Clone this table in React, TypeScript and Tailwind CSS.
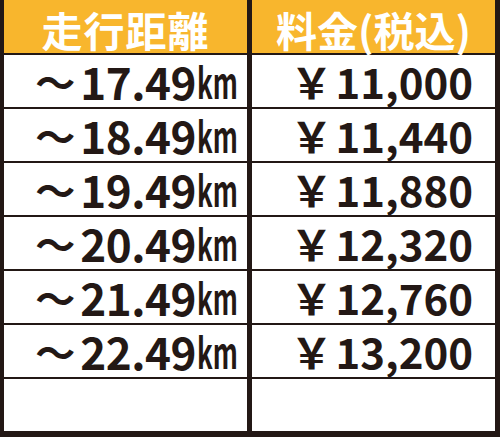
const rows = [
  { distance: '17.49', price: '11,000' },
  { distance: '18.49', price: '11,440' },
  { distance: '19.49', price: '11,880' },
  { distance: '20.49', price: '12,320' },
  { distance: '21.49', price: '12,760' },
  { distance: '22.49', price: '13,200' },
];

const font = { fontFamily: '"Noto Sans CJK JP", "Noto Sans", sans-serif' };

export default function App() {
  return (
    <div
      className="h-[437px] w-[500px] bg-[#231815] pb-[6px] pl-[4px] pr-[5px]"
      style={font}
    >
      <div className="grid grid-cols-[243px_243px] grid-rows-[53px_repeat(7,52px)] gap-x-[5px] gap-y-[2px]">
        {/* ヘッダー */}
        <div className="flex items-center justify-center bg-[#f8b62d] pt-[5px] text-[41px] font-bold leading-none tracking-[1px] text-white">
          走行距離
        </div>
        <div className="flex items-center justify-center bg-[#f8b62d] pt-[5px] text-[41px] font-bold leading-none text-white">
          料金(税込)
        </div>

        {/* 料金行 */}
        {rows.map((row) => (
          <div key={row.distance} className="contents">
            <div className="flex items-center justify-end bg-white pr-[14px] font-bold leading-none text-[#231815]">
              <span className="mr-[5px] text-[40px]">～</span>
              <span className="text-[44px] tracking-[-0.5px]">{row.distance}</span>
              <span className="ml-[1px] inline-block w-[36px] whitespace-nowrap text-[42px]">
                <span className="inline-block origin-left scale-x-[0.62]">km</span>
              </span>
            </div>
            <div className="flex items-center justify-end bg-white pr-[22px] text-[42px] font-bold leading-none text-[#231815]">
              <span className="mr-[3px]">￥</span>
              <span>{row.price}</span>
            </div>
          </div>
        ))}

        {/* 空行 */}
        <div className="bg-white" />
        <div className="bg-white" />
      </div>
    </div>
  );
}
